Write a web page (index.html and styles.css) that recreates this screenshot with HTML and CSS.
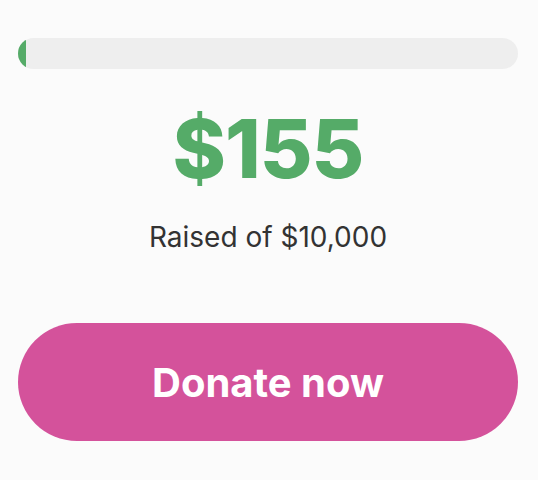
FILE: index.html
```html
<!DOCTYPE html>
<html lang="en">
<head>
  <meta charset="UTF-8" />
  <title>Donate</title>
  <meta name="viewport" content="width=device-width, initial-scale=1.0" />
  <link rel="stylesheet" href="styles.css">
</head>
<body>
  <div class="campaign">
    <div class="progress">
      <div class="progress-fill" style="width: 1.55%"></div>
    </div>

    <div class="raised">$155</div>
    <div class="goal">Raised of $10,000</div>

    <button class="donate-btn">Donate now</button>
  </div>
</body>
</html>
```

FILE: styles.css
```css
body {
  font-family: Inter, 'Noto Sans', sans-serif;
  margin: 0;
  background: #fbfbfb;
  padding: 38px 20px 0 18px;
}

.campaign {
  display: flex;
  flex-direction: column;
  align-items: center;
}

.progress {
  width: 100%;
  height: 31px;
  background: #eeeeee;
  border-radius: 16px;
  overflow: hidden;
}

.progress-fill {
  height: 100%;
  background: #55ab68;
}

.raised {
  margin-top: 30px;
  font-size: 81px;
  font-weight: 800;
  line-height: 100px;
  color: #55ab68;
  letter-spacing: -1px;
}

.goal {
  margin-top: 21px;
  font-size: 28px;
  line-height: 34px;
  color: #333333;
}

.donate-btn {
  margin-top: 69px;
  width: 100%;
  height: 118px;
  border: none;
  border-radius: 59px;
  background: #d4529b;
  color: white;
  font-family: inherit;
  font-size: 40px;
  font-weight: 700;
  cursor: pointer;
}
```
